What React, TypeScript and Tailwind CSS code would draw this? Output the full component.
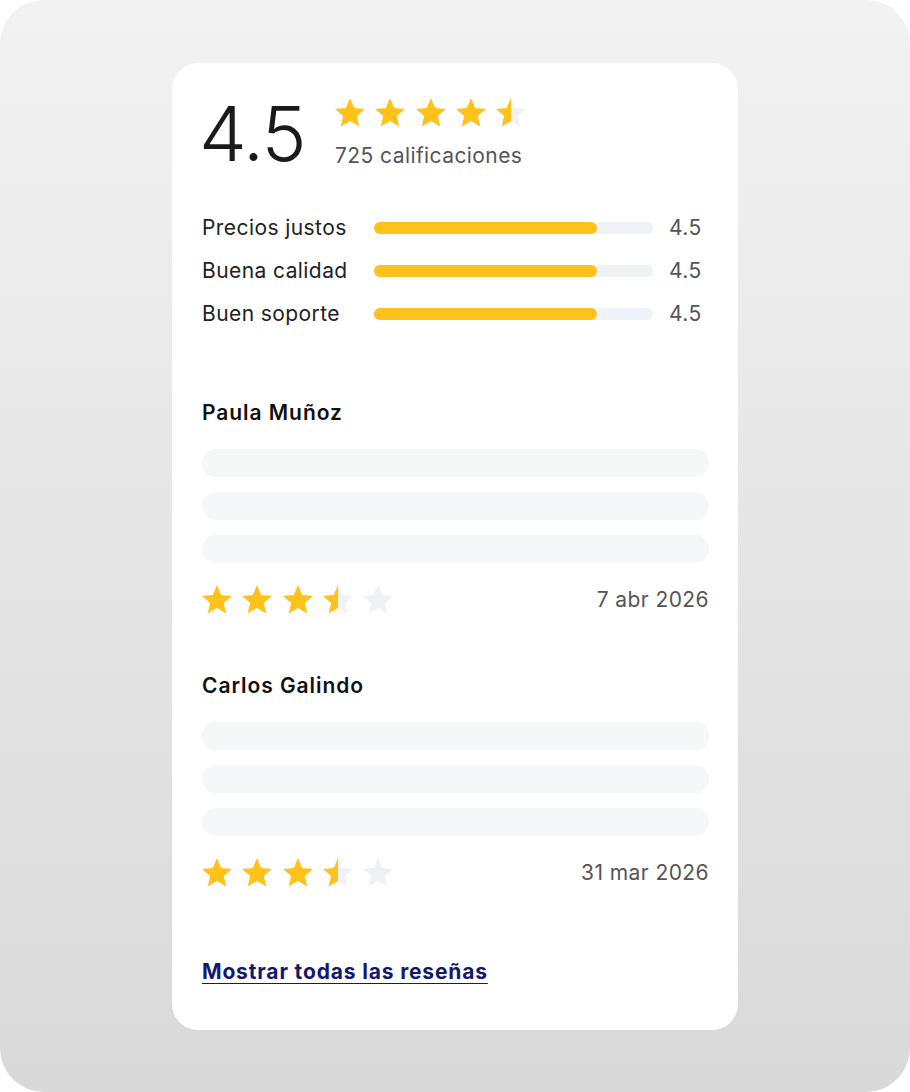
import React from "react";

const YELLOW = "#FFC21A";
const EMPTY = "#EFF1F4";
const STAR_D = "M12 17.27L18.18 21l-1.64-7.03L22 9.24l-7.19-.61L12 2 9.19 8.63 2 9.24l5.46 4.73L5.82 21z";

function Star({ fill, id }: { fill: "full" | "half" | "empty"; id: string }) {
  return (
    <svg width="30" height="29" viewBox="2 2 20 19.3" className="shrink-0">
      <defs>
        <clipPath id={id}>
          <rect x="2" y="0" width="10" height="24" />
        </clipPath>
      </defs>
      <path d={STAR_D} fill={fill === "full" ? YELLOW : EMPTY} />
      {fill === "half" && <path d={STAR_D} fill={YELLOW} clipPath={`url(#${id})`} />}
    </svg>
  );
}

function StarRow({ kinds, prefix }: { kinds: ("full" | "half" | "empty")[]; prefix: string }) {
  return (
    <div className="flex items-center gap-[10.3px]">
      {kinds.map((k, i) => (
        <Star key={i} fill={k} id={`${prefix}-${i}`} />
      ))}
    </div>
  );
}

function Bar({ label }: { label: string }) {
  return (
    <div className="flex h-[43px] items-center">
      <div className="w-[172px] text-[21px] leading-[28px] tracking-[0.02em] text-[#222]">{label}</div>
      <div className="h-[12px] w-[279px] rounded-full bg-[#EFF2F6]">
        <div className="h-full w-[80%] rounded-full bg-[#FFC21A]" />
      </div>
      <div className="ml-[16px] text-[21px] leading-[28px] tracking-[0.02em] text-[#555]">4.5</div>
    </div>
  );
}

function Review({ name, date, prefix }: { name: string; date: string; prefix: string }) {
  return (
    <div className="flex flex-col">
      <div className="text-[21px] font-semibold leading-[28px] tracking-[0.045em] text-[#111]">{name}</div>
      <div className="mt-[22px] flex flex-col gap-[15px]">
        <div className="h-[28px] rounded-full bg-[#F6F7F9]" />
        <div className="h-[28px] rounded-full bg-[#F6F7F9]" />
        <div className="h-[28px] rounded-full bg-[#F6F7F9]" />
      </div>
      <div className="mt-[22px] flex items-center justify-between">
        <StarRow kinds={["full", "full", "full", "half", "empty"]} prefix={prefix} />
        <div className="text-[21px] leading-[28px] tracking-[0.02em] text-[#555]">{date}</div>
      </div>
    </div>
  );
}

export default function App() {
  return (
    <div
      className="h-[1092px] w-[910px] bg-white"
      style={{ fontFamily: "Inter, 'Noto Sans', 'Liberation Sans', sans-serif" }}
    >
      <div className="flex h-full w-full justify-center rounded-[44px] bg-gradient-to-b from-[#F2F2F2] to-[#D9D9D9] pt-[63px]">
        <div className="flex h-[967px] w-[566px] flex-col rounded-[26px] bg-white pl-[30px] pr-[29px] pt-[30px]">
          {/* Header */}
          <div className="flex items-start">
            <div className="-ml-[3px] mt-[2px] w-[136px] text-[76px] font-light leading-[76px] tracking-[-0.02em] text-[#1a1a1a]">4.5</div>
            <div className="flex flex-col pt-[5px]">
              <StarRow kinds={["full", "full", "full", "full", "half"]} prefix="top" />
              <div className="mt-[17px] text-[21px] leading-[24px] tracking-[0.02em] text-[#555]">725 calificaciones</div>
            </div>
          </div>
          {/* Bars */}
          <div className="mt-[35px] flex flex-col">
            <Bar label="Precios justos" />
            <Bar label="Buena calidad" />
            <Bar label="Buen soporte" />
          </div>
          {/* Reviews */}
          <div className="mt-[64px]">
            <Review name="Paula Muñoz" date="7 abr 2026" prefix="r1" />
          </div>
          <div className="mt-[58px]">
            <Review name="Carlos Galindo" date="31 mar 2026" prefix="r2" />
          </div>
          <div className="mt-[71px]">
            <a
              href="#"
              className="text-[21px] font-bold leading-[28px] tracking-[0.04em] text-[#141a6b] underline decoration-[1px] underline-offset-[4px]"
            >
              Mostrar todas las reseñas
            </a>
          </div>
        </div>
      </div>
    </div>
  );
}
